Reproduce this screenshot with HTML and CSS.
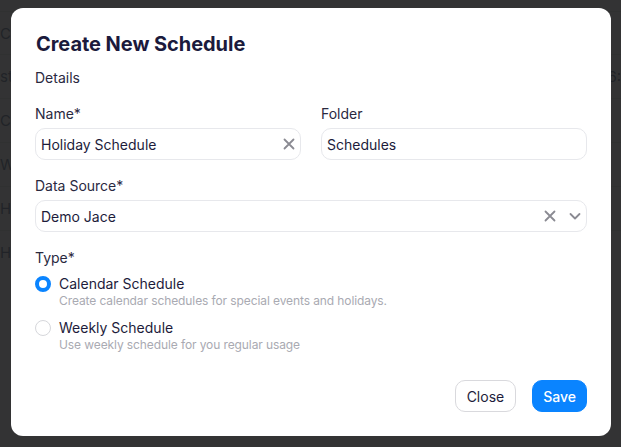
FILE: index.html
```html
<!DOCTYPE html>
<html lang="en">
<head>
<meta charset="utf-8">
<title>Create New Schedule</title>
<link rel="stylesheet" href="styles.css">
</head>
<body>
<div class="page">
  <div class="bg-row bg-first"><span class="bg-cell">C</span></div>
  <div class="bg-row"><span class="bg-cell">st</span><span class="bg-right">6:</span></div>
  <div class="bg-row"><span class="bg-cell">CU</span></div>
  <div class="bg-row"><span class="bg-cell">W</span></div>
  <div class="bg-row"><span class="bg-cell">HU</span></div>
  <div class="bg-row"><span class="bg-cell">HU</span></div>
</div>
<div class="overlay"></div>
<div class="modal">
  <h1 class="title">Create New Schedule</h1>
  <div class="section">Details</div>
  <div class="grid2">
    <div class="field">
      <label class="label">Name*</label>
      <div class="input">
        <span class="value">Holiday Schedule</span>
        <svg class="icon" viewBox="0 0 12 12" width="12" height="12"><path d="M1.5 1.5L10.5 10.5M10.5 1.5L1.5 10.5" stroke="#8a8a92" stroke-width="1.8" stroke-linecap="round"/></svg>
      </div>
    </div>
    <div class="field">
      <label class="label">Folder</label>
      <div class="input">
        <span class="value">Schedules</span>
      </div>
    </div>
  </div>
  <div class="field field-ds">
    <label class="label">Data Source*</label>
    <div class="input">
      <span class="value">Demo Jace</span>
      <span class="icons">
        <svg class="icon" viewBox="0 0 12 12" width="12" height="12"><path d="M1.5 1.5L10.5 10.5M10.5 1.5L1.5 10.5" stroke="#8a8a92" stroke-width="1.8" stroke-linecap="round"/></svg>
        <svg class="icon" viewBox="0 0 12 12" width="12" height="12"><path d="M1.5 4L6 8.5L10.5 4" fill="none" stroke="#8a8a92" stroke-width="1.8" stroke-linecap="round" stroke-linejoin="round"/></svg>
      </span>
    </div>
  </div>
  <div class="label type-label">Type*</div>
  <div class="options">
    <div class="option">
      <span class="radio radio-on"></span>
      <div class="opt-text">
        <div class="opt-title">Calendar Schedule</div>
        <div class="opt-desc">Create calendar schedules for special events and holidays.</div>
      </div>
    </div>
    <div class="option">
      <span class="radio"></span>
      <div class="opt-text">
        <div class="opt-title">Weekly Schedule</div>
        <div class="opt-desc">Use weekly schedule for you regular usage</div>
      </div>
    </div>
  </div>
  <div class="footer">
    <button class="btn btn-close">Close</button>
    <button class="btn btn-save">Save</button>
  </div>
</div>
</body>
</html>
```
FILE: styles.css
```css
* { box-sizing: border-box; }
html, body {
  margin: 0;
  padding: 0;
  width: 621px;
  height: 447px;
  overflow: hidden;
}
body {
  background: #f4f5f7;
  font-family: Inter, "Noto Sans", sans-serif;
  position: relative;
}
.page {
  padding-top: 11px;
}
.bg-row {
  height: 44px;
  border-top: 1px solid #d7dbe2;
  display: flex;
  align-items: center;
  justify-content: space-between;
  font-size: 15px;
  color: #3c5680;
}
.bg-first {
  height: 43px;
}
.overlay {
  position: absolute;
  inset: 0;
  background: rgba(30, 30, 30, 0.9);
}
.modal {
  position: absolute;
  left: 11px;
  top: 8px;
  width: 600px;
  height: 428px;
  background: #fff;
  border-radius: 12px;
  padding: 22px 24px 24px 24px;
  display: flex;
  flex-direction: column;
  color: #1d1c3b;
}
.title {
  margin: 0;
  font-size: 20px;
  line-height: 28px;
  font-weight: 700;
  color: #1b1a3c;
  padding-left: 1px;
  letter-spacing: -0.05px;
}
.section {
  margin-top: 10px;
  font-size: 14px;
  line-height: 20px;
  color: #2a293f;
}
.grid2 {
  margin-top: 16px;
  display: grid;
  grid-template-columns: 1fr 1fr;
  column-gap: 20px;
}
.field {
  display: flex;
  flex-direction: column;
}
.field-ds { margin-top: 16px; }
.label {
  font-size: 14px;
  line-height: 20px;
  color: #2a293f;
  margin-bottom: 4px;
}
.input {
  height: 32px;
  border: 1px solid #e7e8ec;
  border-radius: 10px;
  display: flex;
  align-items: center;
  justify-content: space-between;
  padding: 0 5px 0 5px;
}
.value {
  font-size: 14px;
  color: #1d1c3b;
}
.icons {
  display: flex;
  align-items: center;
  gap: 13px;
}
.icon { display: block; }
.type-label {
  margin-top: 16px;
  margin-bottom: 7px;
}
.options {
  display: flex;
  flex-direction: column;
  gap: 10px;
}
.option {
  display: flex;
  align-items: flex-start;
  gap: 8px;
}
.radio {
  width: 16px;
  height: 16px;
  border-radius: 50%;
  border: 1px solid #d6d7db;
  margin-top: 1px;
  flex: none;
}
.radio-on {
  border: 4.5px solid #0a84ff;
}
.opt-title {
  font-size: 14px;
  line-height: 18px;
  color: #1d1c3b;
}
.opt-desc {
  font-size: 12px;
  line-height: 16px;
  color: #a9aab2;
  letter-spacing: -0.1px;
}
.footer {
  margin-top: auto;
  display: flex;
  justify-content: flex-end;
  gap: 16px;
}
.btn {
  height: 32px;
  border-radius: 10px;
  font-family: Inter, "Noto Sans", sans-serif;
  font-size: 14px;
  padding: 0 11px;
  cursor: pointer;
}
.btn-close {
  background: #fff;
  border: 1px solid #d9d9dd;
  color: #1d1c3b;
}
.btn-save {
  background: #0a84ff;
  border: 1px solid #0a84ff;
  color: #fff;
  font-weight: 500;
  padding: 0 10px;
}
```
